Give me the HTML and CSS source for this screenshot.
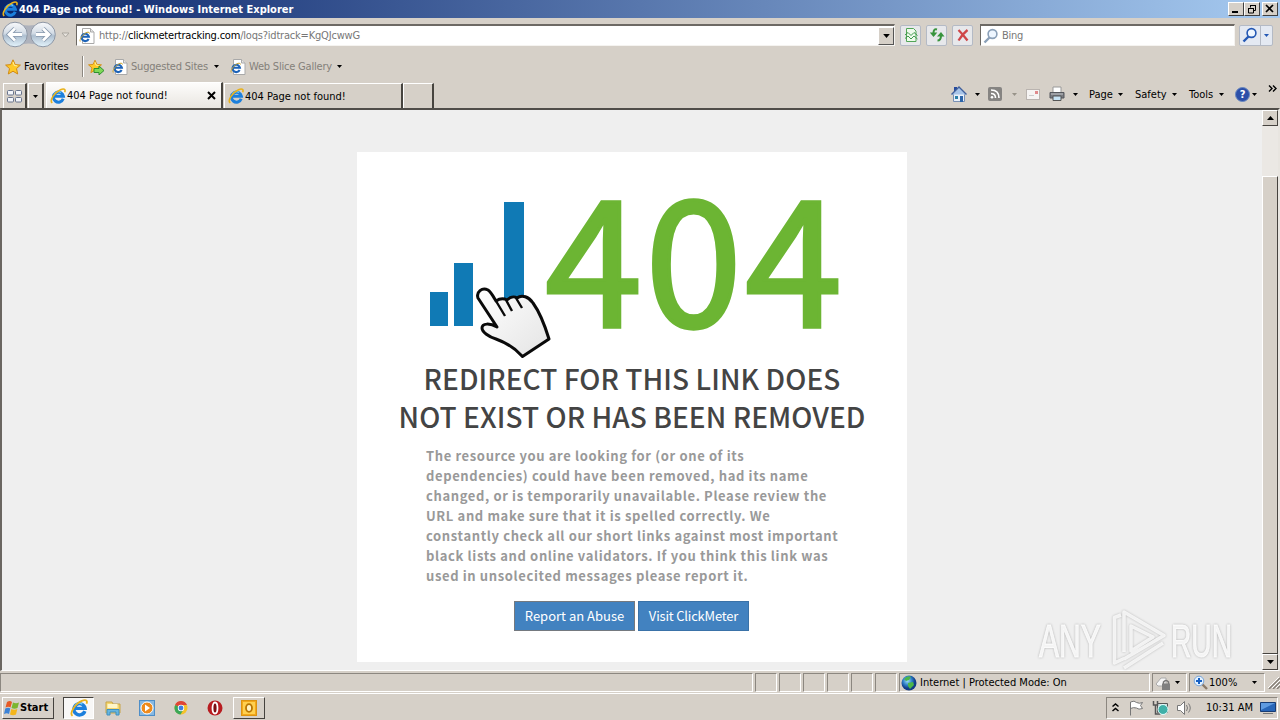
FILE: index.html
```html
<!DOCTYPE html>
<html lang="en">
<head>
  <meta charset="UTF-8">
  <title>404 Page not found!</title>
  <link rel="stylesheet" href="styles.css">
</head>
<body>

  <!-- shared icons -->
  <svg width="0" height="0" class="defs">
    <defs>
      <linearGradient id="orb" x1="0" y1="0" x2="0" y2="1">
        <stop offset="0" stop-color="#f8f9fb"/><stop offset=".45" stop-color="#d3dce6"/><stop offset=".55" stop-color="#aebfd0"/><stop offset="1" stop-color="#e4f4fc"/>
      </linearGradient>
      <linearGradient id="glove" x1="0" y1="0" x2="1" y2="1">
        <stop offset="0" stop-color="#fff"/><stop offset="1" stop-color="#e4e4e4"/>
      </linearGradient>
      <radialGradient id="globe" cx=".4" cy=".35">
        <stop offset="0" stop-color="#9fe0f4"/><stop offset=".6" stop-color="#2d7fc8"/><stop offset="1" stop-color="#123c86"/>
      </radialGradient>
      <symbol id="ie" viewBox="0 0 16 16">
        <path d="M13.200 10.800A5 5 0 1 1 13.400 8.300H4.500" fill="none" stroke="#1c7fdc" stroke-width="3"/>
        <path d="M4.300 6.200A4.600 4.600 0 0 1 11 4.500" fill="none" stroke="#6fcdfa" stroke-width="1.300"/>
        <path d="M2.200 15C-.8 12.500 4.500 4.300 10.500 1.700C13.500.4 16 .9 14.700 4.200" fill="none" stroke="#e9b21c" stroke-width="1.600"/>
      </symbol>
      <symbol id="iepage" viewBox="0 0 16 16">
        <path d="M3.500.5h8l3.500 3.500v11.500h-11.500z" fill="#fff" stroke="#a9a9a9"/>
        <path d="M11.500.5v3.500h3.500" fill="#e6e6e6" stroke="#a9a9a9"/>
        <path d="M9.600 11A3.700 3.700 0 1 1 9.900 8.800H3.500" fill="none" stroke="#1d63b8" stroke-width="2.100"/>
        <path d="M1.200 13.500C0 11.500 4 6 8 4.300Q10.500 3.600 10.500 5.500" fill="none" stroke="#cda52c" stroke-width="1"/>
      </symbol>
      <symbol id="star" viewBox="0 0 16 16">
        <path d="M8 .8l2.200 4.800 5.200.5-3.900 3.500 1.200 5.400L8 12.200 3.300 15l1.200-5.400L.6 6.100l5.200-.5z" fill="#ffc928" stroke="#d18a14"/>
        <path d="M8 3l1.300 3.500 3 .4" fill="none" stroke="#fff0a0"/>
      </symbol>
      <symbol id="down" viewBox="0 0 5 3"><path d="M0 0h5L2.500 3z" fill="currentColor"/></symbol>
      <symbol id="lens" viewBox="0 0 16 16">
        <path d="M6.500 9.500L1.500 14.500" stroke="currentColor" stroke-width="2.400"/>
        <circle cx="9.500" cy="6" r="4.400" fill="#eef6ff" stroke="currentColor" stroke-width="1.600"/>
      </symbol>
    </defs>
  </svg>

  <div class="titlebar">
    <svg class="i16"><use href="#ie"/></svg>
    <span>404 Page not found! - Windows Internet Explorer</span>
    <div class="win-buttons">
      <div class="win-btn"><svg width="12" height="10"><path d="M2 8h6" stroke="#000" stroke-width="2"/></svg></div>
      <div class="win-btn"><svg width="12" height="10"><path d="M4 1.500h6M4.500 1v2.500M9.500 1v5.500H7.500M2 4.500h5.500M2.500 4v5h5V4" fill="none" stroke="#000"/></svg></div>
      <div class="win-btn close"><svg width="12" height="10"><path d="M2 1l7 7M9 1l-7 7" stroke="#000" stroke-width="1.700"/></svg></div>
    </div>
  </div>

  <div class="address-row">
    <svg class="nav" width="72" height="28">
      <path d="M14 2Q29 7 43 2V25Q29 20 14 25z" fill="#aeb2bc"/>
      <circle cx="15" cy="13.500" r="12.300" fill="url(#orb)" stroke="#8e97a5"/>
      <circle cx="43" cy="13.500" r="12.300" fill="url(#orb)" stroke="#8e97a5"/>
      <path d="M22 13.500H10M15 7.500l-6 6 6 6M36 13.500h12M43 7.500l6 6-6 6" fill="none" stroke="#8798ad" stroke-width="4.500"/>
      <path d="M22 13.500H10M15 7.500l-6 6 6 6M36 13.500h12M43 7.500l6 6-6 6" fill="none" stroke="#fff" stroke-width="2.800"/>
      <path d="M62 12h7l-3.500 4z" fill="#e8e4de" stroke="#aaa69f"/>
    </svg>
    <div class="field address">
      <svg class="i16"><use href="#iepage"/></svg>
      <span class="url">http://<b>clickmetertracking.com</b>/loqs?idtrack=KgQJcwwG</span>
      <div class="drop-btn"><svg class="arrow big"><use href="#down"/></svg></div>
    </div>
    <div class="tool-btn"><svg class="i16" viewBox="0 0 16 16"><path d="M3.500 1.500h7l2.500 2.500v10.500H3.500z" fill="#eefaec" stroke="#52a557"/><path d="M2 8l3-2.500 3 3 3-3 3.500 3M2 11.500l3-2.500 3 3 3-3 3.500 3" fill="none" stroke="#3d984b"/></svg></div>
    <div class="tool-btn"><svg class="i16" viewBox="0 0 16 16"><path d="M8 2.500Q4.500 1.500 4.500 6M8.500 13.500q3.500 0 3.500-5" fill="none" stroke="#38943d" stroke-width="2"/><path d="M.8 5.500h7.500L4.500 10zM8 9.500h7.500L12 5z" fill="#38943d"/></svg></div>
    <div class="tool-btn"><svg class="i16" viewBox="0 0 16 16"><path d="M3.500 3q4 4 9 10.500M12.500 3Q8 6.500 3.500 13.500" fill="none" stroke="#cf4648" stroke-width="2.300"/></svg></div>
    <div class="field search">
      <svg class="i16 pale"><use href="#lens"/></svg>
      <span>Bing</span>
    </div>
    <div class="search-btn">
      <svg class="i16 blue"><use href="#lens"/></svg>
      <i></i>
      <svg class="arrow blue"><use href="#down"/></svg>
    </div>
  </div>

  <div class="favorites-row">
    <svg class="i16"><use href="#star"/></svg>
    <span class="fav">Favorites</span>
    <i class="sep"></i>
    <svg class="i16" viewBox="0 0 16 16"><use href="#star" width="14" height="15"/><path d="M6 9.500h5V7l5 4.500-5 4.500v-2.500H6z" fill="#7ed957" stroke="#2e8f2e"/></svg>
    <svg class="i16 page1"><use href="#iepage"/></svg>
    <span class="gray sites">Suggested Sites</span>
    <svg class="arrow"><use href="#down"/></svg>
    <svg class="i16 page2"><use href="#iepage"/></svg>
    <span class="gray slice">Web Slice Gallery</span>
    <svg class="arrow"><use href="#down"/></svg>
  </div>

  <div class="tab-row">
    <div class="quick"><svg width="16" height="14"><g fill="#f3f5fa" stroke="#68738c"><rect x=".5" y="1.500" width="6" height="4.500" rx="1"/><rect x="8.500" y="1.500" width="6" height="4.500" rx="1"/><rect x=".5" y="8.500" width="6" height="4.500" rx="1"/><rect x="8.500" y="8.500" width="6" height="4.500" rx="1"/></g></svg></div>
    <div class="quick-drop"><svg class="arrow"><use href="#down"/></svg></div>
    <div class="tab active">
      <svg class="i16"><use href="#ie"/></svg>
      <span>404 Page not found!</span>
      <svg class="tab-x" width="9" height="9"><path d="M1 1l7 7M8 1L1 8" stroke="#000" stroke-width="2"/></svg>
    </div>
    <div class="tab">
      <svg class="i16"><use href="#ie"/></svg>
      <span>404 Page not found!</span>
    </div>
    <div class="tab new"></div>
    <div class="commands">
      <svg width="16" height="18" viewBox="0 0 16 18"><path d="M3 2h3v4H3z" fill="#254a9d"/><path d="M2.500 8.500h11v8h-11z" fill="#e9f0fa" stroke="#7890b5"/><path d="M.5 9.500L8 2l7.500 7.500" fill="#a8c4e8" stroke="#405f9b" stroke-width="1.400"/><path d="M9 11h3v6H9z" fill="#2d65aa"/><path d="M4 11h3v3H4z" fill="#2b80a8"/></svg>
      <svg class="arrow a1"><use href="#down"/></svg>
      <svg class="rss" width="14" height="14"><rect width="14" height="14" rx="2" fill="#868482"/><path d="M3 6.500q4.500 0 4.500 4.500M3 3q8 0 8 8" fill="none" stroke="#fff" stroke-width="1.600"/><circle cx="4" cy="10.200" r="1.300" fill="#fff"/></svg>
      <svg class="arrow a2"><use href="#down"/></svg>
      <svg class="mail" width="14" height="11"><rect x=".5" y=".5" width="13" height="10" fill="#f6f4f3" stroke="#bab4b0"/><path d="M9 2h3v3H9z" fill="#e08a8c"/><path d="M3 6.500h5" stroke="#ccc"/></svg>
      <svg class="print" width="16" height="16"><path d="M4 1h8v6H4z" fill="#fff" stroke="#999"/><path d="M1 6.500h14V12H1z" fill="#797b80" stroke="#55575c"/><path d="M4 10h8v4.500H4z" fill="#c7e3f4" stroke="#555"/><path d="M2 8h12" stroke="#c4c6c9"/></svg>
      <svg class="arrow a3"><use href="#down"/></svg>
      <span class="c-page">Page</span>
      <svg class="arrow"><use href="#down"/></svg>
      <span class="c-safety">Safety</span>
      <svg class="arrow"><use href="#down"/></svg>
      <span class="c-tools">Tools</span>
      <svg class="arrow"><use href="#down"/></svg>
      <div class="help">?</div>
      <svg class="arrow a4"><use href="#down"/></svg>
      <svg class="more" width="9" height="7"><path d="M1 .5l3 3-3 3M5 .5l3 3-3 3" fill="none" stroke="#000" stroke-width="1.400"/></svg>
    </div>
  </div>

  <div class="viewport">
    <div class="page">
      <div class="card">
        <div class="art">
          <svg width="124" height="164" viewBox="428 196 124 164">
            <path d="M430 292h18v34h-18zM454 263h19v63h-19zM504 202h20v100h-20z" fill="#107ab5"/>
            <path d="M478 298C476 292 482 287 488 290C491 292 493 296 496 301C499 299 503 298 507 300C510 297 514 296 517 298C522 294 529 297 533 303C541 314 545 326 549 339L522.500 356.500C515 348 507 343 496 339C489 337 482 332 482 328C482 323 490 323 497 327Z" fill="url(#glove)" stroke="#0a0a0a" stroke-width="3" stroke-linejoin="round"/>
            <path d="M496 301l9 15M506 300l6 11M516 298l6 10" fill="none" stroke="#0a0a0a" stroke-width="2.400"/>
          </svg>
          <div class="code">404</div>
        </div>
        <h1>REDIRECT FOR THIS LINK DOES<br>NOT EXIST OR HAS BEEN REMOVED</h1>
        <p>The resource you are looking for (or one of its<br>
          dependencies) could have been removed, had its name<br>
          changed, or is temporarily unavailable. Please review the<br>
          URL and make sure that it is spelled correctly. We<br>
          constantly check all our short links against most important<br>
          black lists and online validators. If you think this link was<br>
          used in unsolecited messages please report it.</p>
        <div class="actions">
          <a class="btn abuse">Report an Abuse</a>
          <a class="btn visit">Visit ClickMeter</a>
        </div>
      </div>
    </div>
    <div class="scrollbar">
      <div class="sb-btn"><svg width="7" height="4"><path d="M0 4h7L3.500 0z"/></svg></div>
      <div class="thumb"></div>
      <div class="sb-btn"><svg width="7" height="4"><path d="M0 0h7L3.500 4z"/></svg></div>
    </div>
    <div class="watermark">
      <span class="wm-any">ANY</span>
      <svg width="56" height="62"><path d="M13 49.500L3.500 54V8.500L10 6M13 43V3L53 26.500 13 50M13 59L52 34M20 17v25l22-14z" fill="none" stroke="#fff" stroke-opacity=".8" stroke-width="3.500" stroke-linejoin="round"/></svg>
      <span class="wm-run">RUN</span>
    </div>
  </div>

  <div class="statusbar">
    <div class="cell main"></div>
    <div class="cell"></div>
    <div class="cell"></div>
    <div class="cell"></div>
    <div class="cell"></div>
    <div class="cell"></div>
    <div class="cell"></div>
    <div class="cell zone">
      <svg class="i16" viewBox="0 0 16 16"><circle cx="8" cy="8" r="7.500" fill="url(#globe)"/><path d="M3 4q4-4 7-2l-2 3-3 1zM7 8l5-1 1 3-4 4-2-3z" fill="#4cb649"/></svg>
      <span>Internet | Protected Mode: On</span>
    </div>
    <div class="cell lock">
      <svg class="i16" viewBox="0 0 16 16"><path d="M1 9l5-6h5v8H3z" fill="#f5f5f5" stroke="#aaa"/><path d="M8.500 9V7q2.500-3 5 0v2" fill="none" stroke="#777" stroke-width="1.500"/><path d="M7 8.500h8V15H7z" fill="#808080"/></svg>
      <svg class="arrow"><use href="#down"/></svg>
    </div>
    <div class="cell zoom">
      <svg class="i16" viewBox="0 0 16 16"><path d="M9 9l5 5" stroke="#8b7a68" stroke-width="2.400"/><circle cx="6" cy="6" r="4.800" fill="#e2f1ff" stroke="#7aa5d8"/><path d="M3 6h6M6 3v6" stroke="#1660c4" stroke-width="2"/></svg>
      <span>100%</span>
      <svg class="arrow"><use href="#down"/></svg>
    </div>
    <svg class="grip" width="12" height="12"><path d="M1 12L12 1M5 12l7-7M9 12l3-3" stroke="#878078" stroke-width="1.500"/><path d="M0 11L11 0M4 11l8-8M8 11l4-4" stroke="#fff"/></svg>
  </div>

  <div class="taskbar">
    <div class="start">
      <svg width="16" height="16"><path d="M3 2q3-2 5 0L6.500 7.500q-2-1.500-5 0z" fill="#e65a26"/><path d="M9 2.500q3 1.500 6 0L13.500 8q-3 1.500-6 0z" fill="#7cb62f"/><path d="M1.300 8.500q3-1.500 5 0L5 14q-2-1.500-5 0z" fill="#3b82d6"/><path d="M7.300 9q3 1.500 6 0L12 14.500q-3 1.500-6 0z" fill="#f4b61c"/></svg>
      <span>Start</span>
    </div>
    <div class="task pressed"><svg width="18" height="18"><use href="#ie"/></svg></div>
    <svg class="t-folder" width="16" height="16"><path d="M1 2h6l1 2h7v9H1z" fill="#f5d66d" stroke="#c7a449"/><path d="M2.500 4h10v4h-10z" fill="#fff6c8"/><path d="M2 15V9.500h12V15h-3v-3H5v3z" fill="#67b6df" stroke="#3f8fc0"/></svg>
    <svg class="t-media" width="16" height="16"><rect x=".5" y=".5" width="15" height="15" fill="#86b8e2" stroke="#4e8ec8"/><circle cx="8" cy="8" r="6" fill="#ee8a1c" stroke="#fff"/><path d="M6 4.500l5 3.500-5 3.500z" fill="#fff"/></svg>
    <svg class="t-chrome" width="14" height="14" viewBox="0 0 14 14"><circle cx="7" cy="7" r="6.500" fill="#f4c22b"/><path d="M7 7L1 4A6.500 6.500 0 0 1 13 4H7z" fill="#df4637"/><path d="M7 7L1.200 4A6.500 6.500 0 0 0 6.500 13.500L9.500 8.500z" fill="#3ba757"/><circle cx="7" cy="7" r="3.200" fill="#fff"/><circle cx="7" cy="7" r="2.400" fill="#3f7fe0"/></svg>
    <svg class="t-opera" width="16" height="16"><circle cx="8" cy="8" r="7.500" fill="#b81c20"/><ellipse cx="8" cy="8" rx="2.500" ry="5.500" fill="#7c0e12" stroke="#fff" stroke-width="1.800"/></svg>
    <div class="task outlook"><svg width="16" height="16"><rect x=".5" y=".5" width="15" height="15" fill="#f3a81c" stroke="#dc9410"/><rect x="2" y="2" width="12" height="12" fill="#ffd04f"/><ellipse cx="8" cy="8" rx="3" ry="3.800" fill="#fff3c4" stroke="#b87504" stroke-width="1.800"/></svg></div>
    <div class="tray">
      <svg class="chev" width="7" height="9"><path d="M.5 3.500l3-2.500 3 2.500M.5 8l3-2.500 3 2.500" fill="none" stroke="#000" stroke-width="1.500"/></svg>
      <svg class="flag" width="17" height="16"><path d="M2.500 15.500V2q4-2 6 .5 3 1.500 6 0l-2 3 2 3q-4 1.500-6-.5-3-1-6 .5" fill="#fff" stroke="#777"/></svg>
      <svg class="net" width="17" height="16"><path d="M5.500 3.500h10v9h-10z" fill="#cfdddd" stroke="#555"/><path d="M1.500 1v4h4V1M3.500 5v9h5" fill="none" stroke="#555" stroke-width="1.500"/><circle cx="11" cy="9.500" r="5" fill="#3fb0a8" stroke="#e5ffff"/></svg>
      <svg class="sound" width="17" height="16"><path d="M1.500 5.500h3l4-4v13l-4-4h-3z" fill="#fff" stroke="#777"/><path d="M10.500 5q2 3 0 6M12.500 3.500q3.500 4.500 0 9" fill="none" stroke="#777"/></svg>
      <span class="clock">10:31 AM</span>
      <svg class="desk" width="16" height="14"><path d="M.5 1.500h15v9H.5z" fill="#2866b8" stroke="#173c74"/><path d="M1 2h14L1 9z" fill="#5f9be0"/><path d="M3 12.500h10" stroke="#777"/></svg>
    </div>
  </div>

</body>
</html>
```
FILE: styles.css
```css
* {
  box-sizing: border-box;
}

body {
  margin: 0;
  width: 1280px;
  height: 720px;
  overflow: hidden;
  display: flex;
  flex-direction: column;
  background-color: #d6d0c8;
  font-family: "DejaVu Sans Condensed", "DejaVu Sans", sans-serif;
  font-stretch: condensed;
  font-size: 11px;
  color: #000;
}

svg {
  display: block;
  flex: none;
}

span {
  white-space: nowrap;
  flex: none;
}

.defs {
  position: absolute;
}

.i16 {
  width: 16px;
  height: 16px;
}

.arrow {
  width: 5px;
  height: 3px;
}

.arrow.big {
  width: 7px;
  height: 4px;
}

.blue {
  color: #2458b4;
}

.pale {
  color: #8ba0b8;
}

/* title bar */
.titlebar {
  height: 18px;
  display: flex;
  align-items: center;
  padding-left: 2px;
  background: linear-gradient(to right, #0a246a, #a6caf0);
  color: #fff;
  font-weight: bold;
}

.titlebar span {
  margin-left: 1px;
}

.win-buttons {
  margin-left: auto;
  margin-right: 2px;
  display: flex;
}

.win-btn {
  width: 16px;
  height: 14px;
  padding: 1px;
  background-color: #d6d0c8;
  border: 1px solid;
  border-color: #fff #404040 #404040 #fff;
}

.close {
  margin-left: 2px;
}

/* address row */
.address-row {
  height: 34px;
  display: flex;
  align-items: center;
}

.nav {
  margin-right: 4px;
}

.field {
  display: flex;
  align-items: center;
  height: 22px;
  background-color: #fff;
  border: 1px solid;
  border-color: #6d6964 #f5f3f0 #f5f3f0 #6d6964;
  border-top-width: 2px;
  color: #777;
}

.address {
  width: 819px;
  padding-left: 2px;
}

.url {
  margin-left: 4px;
  letter-spacing: -0.2px;
}

.url b {
  font-weight: normal;
  color: #000;
}

.drop-btn {
  margin-left: auto;
  width: 16px;
  height: 18px;
  display: flex;
  align-items: center;
  justify-content: center;
  background-color: #d6d0c8;
  border: 1px solid;
  border-color: #fff #555 #555 #fff;
  color: #000;
}

.tool-btn {
  width: 21px;
  height: 21px;
  margin-left: 5px;
  display: flex;
  align-items: center;
  justify-content: center;
  background-color: #e7e8eb;
  border: 1px solid #b4bac5;
  border-radius: 2px;
}

.search {
  width: 255px;
  margin-left: 7px;
  padding-left: 2px;
}

.search span {
  margin-left: 3px;
  letter-spacing: -0.3px;
}

.search-btn {
  width: 34px;
  height: 21px;
  margin-left: 4px;
  padding-left: 2px;
  display: flex;
  align-items: center;
  background-color: #e4e9f2;
  border: 1px solid #b4bac5;
  border-radius: 2px;
}

.search-btn i {
  width: 1px;
  height: 19px;
  margin: 0 3px 0 2px;
  background-color: #b4bac5;
}

/* favorites bar */
.favorites-row {
  height: 29px;
  display: flex;
  align-items: center;
  padding-left: 5px;
}

.fav {
  margin-left: 3px;
  width: 58px;
}

.sep {
  width: 2px;
  height: 21px;
  margin-right: 4px;
  border-left: 1px solid #8c8780;
  border-right: 1px solid #fff;
}

.gray {
  color: #84807a;
  letter-spacing: -0.2px;
}

.page1 {
  margin-left: 8px;
}

.page2 {
  margin-left: 11px;
}

.sites {
  margin-left: 3px;
  width: 83px;
}

.slice {
  margin-left: 3px;
  width: 88px;
}

/* tabs and command bar */
.tab-row {
  height: 27px;
  display: flex;
  align-items: flex-end;
  padding-left: 3px;
}

.quick, .quick-drop, .tab {
  height: 25px;
  display: flex;
  align-items: center;
  border-top: 1px solid #fff;
  border-left: 1px solid #fff;
  border-right: 2px solid #47443f;
}

.quick {
  width: 24px;
  padding-left: 3px;
}

.quick-drop {
  width: 16px;
  margin-left: 1px;
  padding-left: 4px;
}

.tab {
  width: 179px;
  margin-left: 1px;
  padding-left: 3px;
}

.tab span {
  margin-left: 1px;
}

.tab.active {
  width: 177px;
  margin-left: 2px;
  padding-left: 3px;
  height: 26px;
  background: linear-gradient(#fdfcfb, #e9e6e1);
}

.tab.new {
  width: 31px;
  margin-left: 0;
}

.tab-x {
  margin-left: auto;
  margin-right: 5px;
}

.commands {
  margin-left: auto;
  height: 28px;
  display: flex;
  align-items: center;
  padding-right: 3px;
}

.a1 {
  margin: 0 8px;
}

.a2 {
  margin: 0 9px 0 10px;
  color: #989389;
}

.print {
  margin-left: 9px;
}

.a3 {
  margin: 0 11px 0 8px;
}

.c-page {
  width: 29px;
}

.c-safety {
  margin-left: 12px;
  width: 37px;
}

.c-tools {
  margin-left: 12px;
  width: 30px;
}

.help {
  width: 15px;
  height: 15px;
  margin-left: 11px;
  border: 1px solid #6887c0;
  border-radius: 50%;
  background-color: #2c4fa8;
  color: #fff;
  font-weight: bold;
  line-height: 13px;
  text-align: center;
}

.a4 {
  margin: 0 11px 0 2px;
}

.more {
  margin-bottom: 12px;
}

/* page content */
.viewport {
  position: relative;
  height: 563px;
  display: flex;
  border: 1px solid #fff;
  border-top: 2px solid #504d49;
  border-left: 2px solid #6a6661;
  border-right: 2px solid #e8e5e0;
  background-color: #efefef;
}

.page {
  flex: 1;
  padding: 42px 0 0 355px;
}

.card {
  width: 550px;
  height: 510px;
  padding-top: 44px;
  background-color: #fff;
  font-family: "Noto Sans CJK SC", sans-serif;
  font-stretch: normal;
}

.art {
  height: 164px;
  padding-left: 71px;
  display: flex;
}

.code {
  height: 133px;
  margin-left: -7px;
  font-size: 175px;
  line-height: 110px;
  letter-spacing: 2.9px;
  color: #6cb533;
  -webkit-text-stroke: 3.4px #6cb533;
}

h1 {
  margin: -1px 0 0;
  font-size: 28px;
  font-weight: 500;
  line-height: 38px;
  letter-spacing: 0.07px;
  text-align: center;
  white-space: nowrap;
  color: #444;
}

p {
  margin: 11px 0 0 69px;
  font-size: 13px;
  font-weight: bold;
  line-height: 20px;
  letter-spacing: 0.63px;
  white-space: nowrap;
  color: #999;
}

.actions {
  margin: 15px 0 0 157px;
  display: flex;
  gap: 3px;
}

.btn {
  height: 30px;
  border: 1px solid #3a72a8;
  background-color: #4282c0;
  color: #fff;
  font-size: 13px;
  line-height: 28px;
  text-align: center;
  white-space: nowrap;
}

.abuse {
  width: 121px;
  border-color: #74797f;
}

.visit {
  width: 111px;
  letter-spacing: -0.2px;
}

/* scrollbar */
.scrollbar {
  width: 16px;
  display: flex;
  flex-direction: column;
  background-color: #ebe8e4;
}

.sb-btn {
  width: 16px;
  height: 16px;
  display: flex;
  align-items: center;
  justify-content: center;
  background-color: #d6d0c8;
  border: 1px solid;
  border-color: #fff #45423e #45423e #fff;
}

.thumb {
  flex: 1;
  margin-top: 50px;
  background-color: #d6d0c8;
  border: 1px solid;
  border-color: #fff #45423e #45423e #fff;
}

.watermark {
  position: absolute;
  left: 1037px;
  top: 499px;
  display: flex;
  align-items: center;
  color: rgba(255, 255, 255, 0.85);
  font-family: "Liberation Sans", sans-serif;
  font-stretch: normal;
  font-size: 47px;
  -webkit-text-stroke: 1px rgba(255, 255, 255, 0.85);
  filter: drop-shadow(0 0 1px #aaa);
}

.wm-any, .wm-run {
  width: 64px;
  transform: scaleX(0.64);
  transform-origin: left;
}

.wm-run {
  transform: scaleX(0.6);
}

.watermark svg {
  margin: 0 4px 0 8px;
}

/* status bar */
.statusbar {
  height: 21px;
  margin-top: 1px;
  padding: 1px 0 1px 0;
  display: flex;
  gap: 2px;
  align-items: center;
}

.cell {
  width: 22px;
  height: 19px;
  display: flex;
  align-items: center;
  border: 1px solid;
  border-color: #8c8780 #fff #fff #8c8780;
}

.cell.main {
  width: 753px;
}

.cell.zone {
  width: 251px;
  padding-left: 1px;
}

.zone span {
  margin-left: 3px;
}

.cell.lock {
  width: 35px;
  padding-left: 2px;
}

.lock .arrow {
  margin-left: 4px;
}

.cell.zoom {
  width: 76px;
  padding-left: 3px;
}

.zoom span {
  margin-left: 0;
  width: 43px;
}

/* taskbar */
.taskbar {
  flex: 1;
  display: flex;
  align-items: center;
  padding: 1px 2px 0;
  border-top: 1px solid #fff;
}

.start {
  width: 52px;
  height: 22px;
  display: flex;
  align-items: center;
  border: 1px solid;
  border-color: #fff #45423e #45423e #fff;
  font-weight: bold;
}

.start svg {
  margin-left: 1px;
}

.task {
  width: 32px;
  height: 22px;
  display: flex;
  align-items: center;
  justify-content: center;
  border: 1px solid;
  border-color: #fff #45423e #45423e #fff;
}

.task.pressed {
  width: 31px;
  margin-left: 9px;
  background-color: #f8f7f6;
  border-color: #45423e #fff #fff #45423e;
}

.t-folder {
  margin-left: 11px;
}

.t-media {
  margin-left: 18px;
}

.t-chrome {
  margin-left: 19px;
}

.t-opera {
  margin-left: 19px;
}

.outlook {
  margin-left: 10px;
}

.tray {
  width: 172px;
  height: 22px;
  margin-left: auto;
  display: flex;
  align-items: center;
  padding-left: 5px;
  border: 1px solid;
  border-color: #8c8780 #fff #fff #8c8780;
}

.flag {
  margin-left: 9px;
}

.net, .sound {
  margin-left: 7px;
}

.clock {
  margin-left: 13px;
  width: 54px;
}

.grip {
  margin-left: auto;
}
```
